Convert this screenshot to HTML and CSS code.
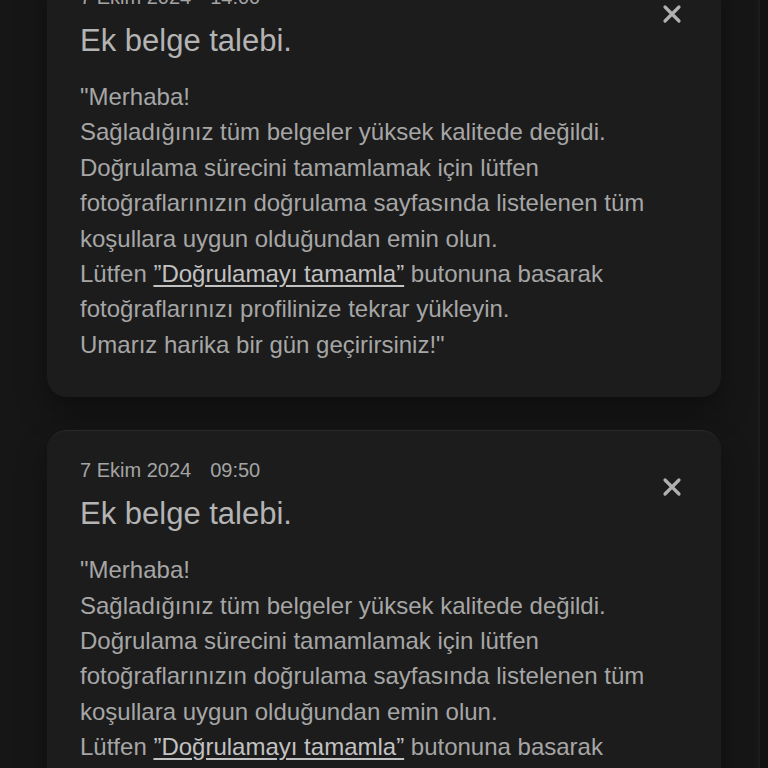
FILE: index.html
```html
<!DOCTYPE html>
<html lang="tr">
<head>
<meta charset="utf-8">
<link rel="stylesheet" href="styles.css">
</head>
<body>
<div class="page">
  <div class="list">
    <article class="card card-first">
      <div class="meta"><span>7 Ekim 2024</span><span>14:00</span></div>
      <button class="close" aria-label="Kapat"><svg viewBox="0 0 20 20" width="20" height="20"><path d="M3 3L17 17M17 3L3 17" stroke="currentColor" stroke-width="3.2" stroke-linecap="round"/></svg></button>
      <h2 class="title">Ek belge talebi.</h2>
      <p class="body">"Merhaba!<br>Sağladığınız tüm belgeler yüksek kalitede değildi.<br>Doğrulama sürecini tamamlamak için lütfen fotoğraflarınızın doğrulama sayfasında listelenen tüm koşullara uygun olduğundan emin olun.<br>Lütfen <a href="#">”Doğrulamayı tamamla”</a> butonuna basarak fotoğraflarınızı profilinize tekrar yükleyin.<br>Umarız harika bir gün geçirirsiniz!"</p>
    </article>
    <article class="card">
      <div class="meta"><span>7 Ekim 2024</span><span>09:50</span></div>
      <button class="close" aria-label="Kapat"><svg viewBox="0 0 20 20" width="20" height="20"><path d="M3 3L17 17M17 3L3 17" stroke="currentColor" stroke-width="3.2" stroke-linecap="round"/></svg></button>
      <h2 class="title">Ek belge talebi.</h2>
      <p class="body">"Merhaba!<br>Sağladığınız tüm belgeler yüksek kalitede değildi.<br>Doğrulama sürecini tamamlamak için lütfen fotoğraflarınızın doğrulama sayfasında listelenen tüm koşullara uygun olduğundan emin olun.<br>Lütfen <a href="#">”Doğrulamayı tamamla”</a> butonuna basarak fotoğraflarınızı profilinize tekrar yükleyin.<br>Umarız harika bir gün geçirirsiniz!"</p>
    </article>
  </div>
  <div class="rail"></div>
</div>
</body>
</html>
```
FILE: styles.css
```css
html, body {
  margin: 0;
  padding: 0;
  height: 100%;
  overflow: hidden;
  background: #161616;
}
body {
  font-family: "Liberation Sans", Arial, sans-serif;
  color: #a9a9a9;
}
.page {
  display: flex;
  height: 768px;
  overflow: hidden;
}
.list {
  flex: 1;
  display: flex;
  flex-direction: column;
  gap: 33px;
  padding: 0 37px 0 47px;
  margin-top: -43px;
}
.rail {
  width: 8px;
  flex: none;
  background: #111111;
  border-left: 2px solid #1c1c1c;
}
.card {
  position: relative;
  background: #1c1c1c;
  border-radius: 20px;
  border-top: 1px solid #2a2a2a;
  padding: 26px 33px 35px 33px;
  box-shadow: 0 16px 30px rgba(0, 0, 0, 0.35);
  flex: none;
}
.meta {
  display: flex;
  gap: 19px;
  font-size: 20px;
  line-height: 26px;
  color: #a4a4a4;
}
.close {
  position: absolute;
  top: 46px;
  right: 39px;
  width: 20px;
  height: 20px;
  padding: 0;
  border: 0;
  background: none;
  color: #b0b0b0;
  display: block;
}
.close svg { display: block; }
.title {
  margin: 11px 0 0;
  font-size: 31px;
  line-height: 40px;
  font-weight: normal;
  color: #b4b4b4;
}
.body {
  margin: 18px 0 0;
  font-size: 24px;
  line-height: 35.4px;
  color: #a6a6a6;
}
.body a {
  color: #c2c2c2;
  text-decoration: underline;
  text-underline-offset: 3px;
}
```
